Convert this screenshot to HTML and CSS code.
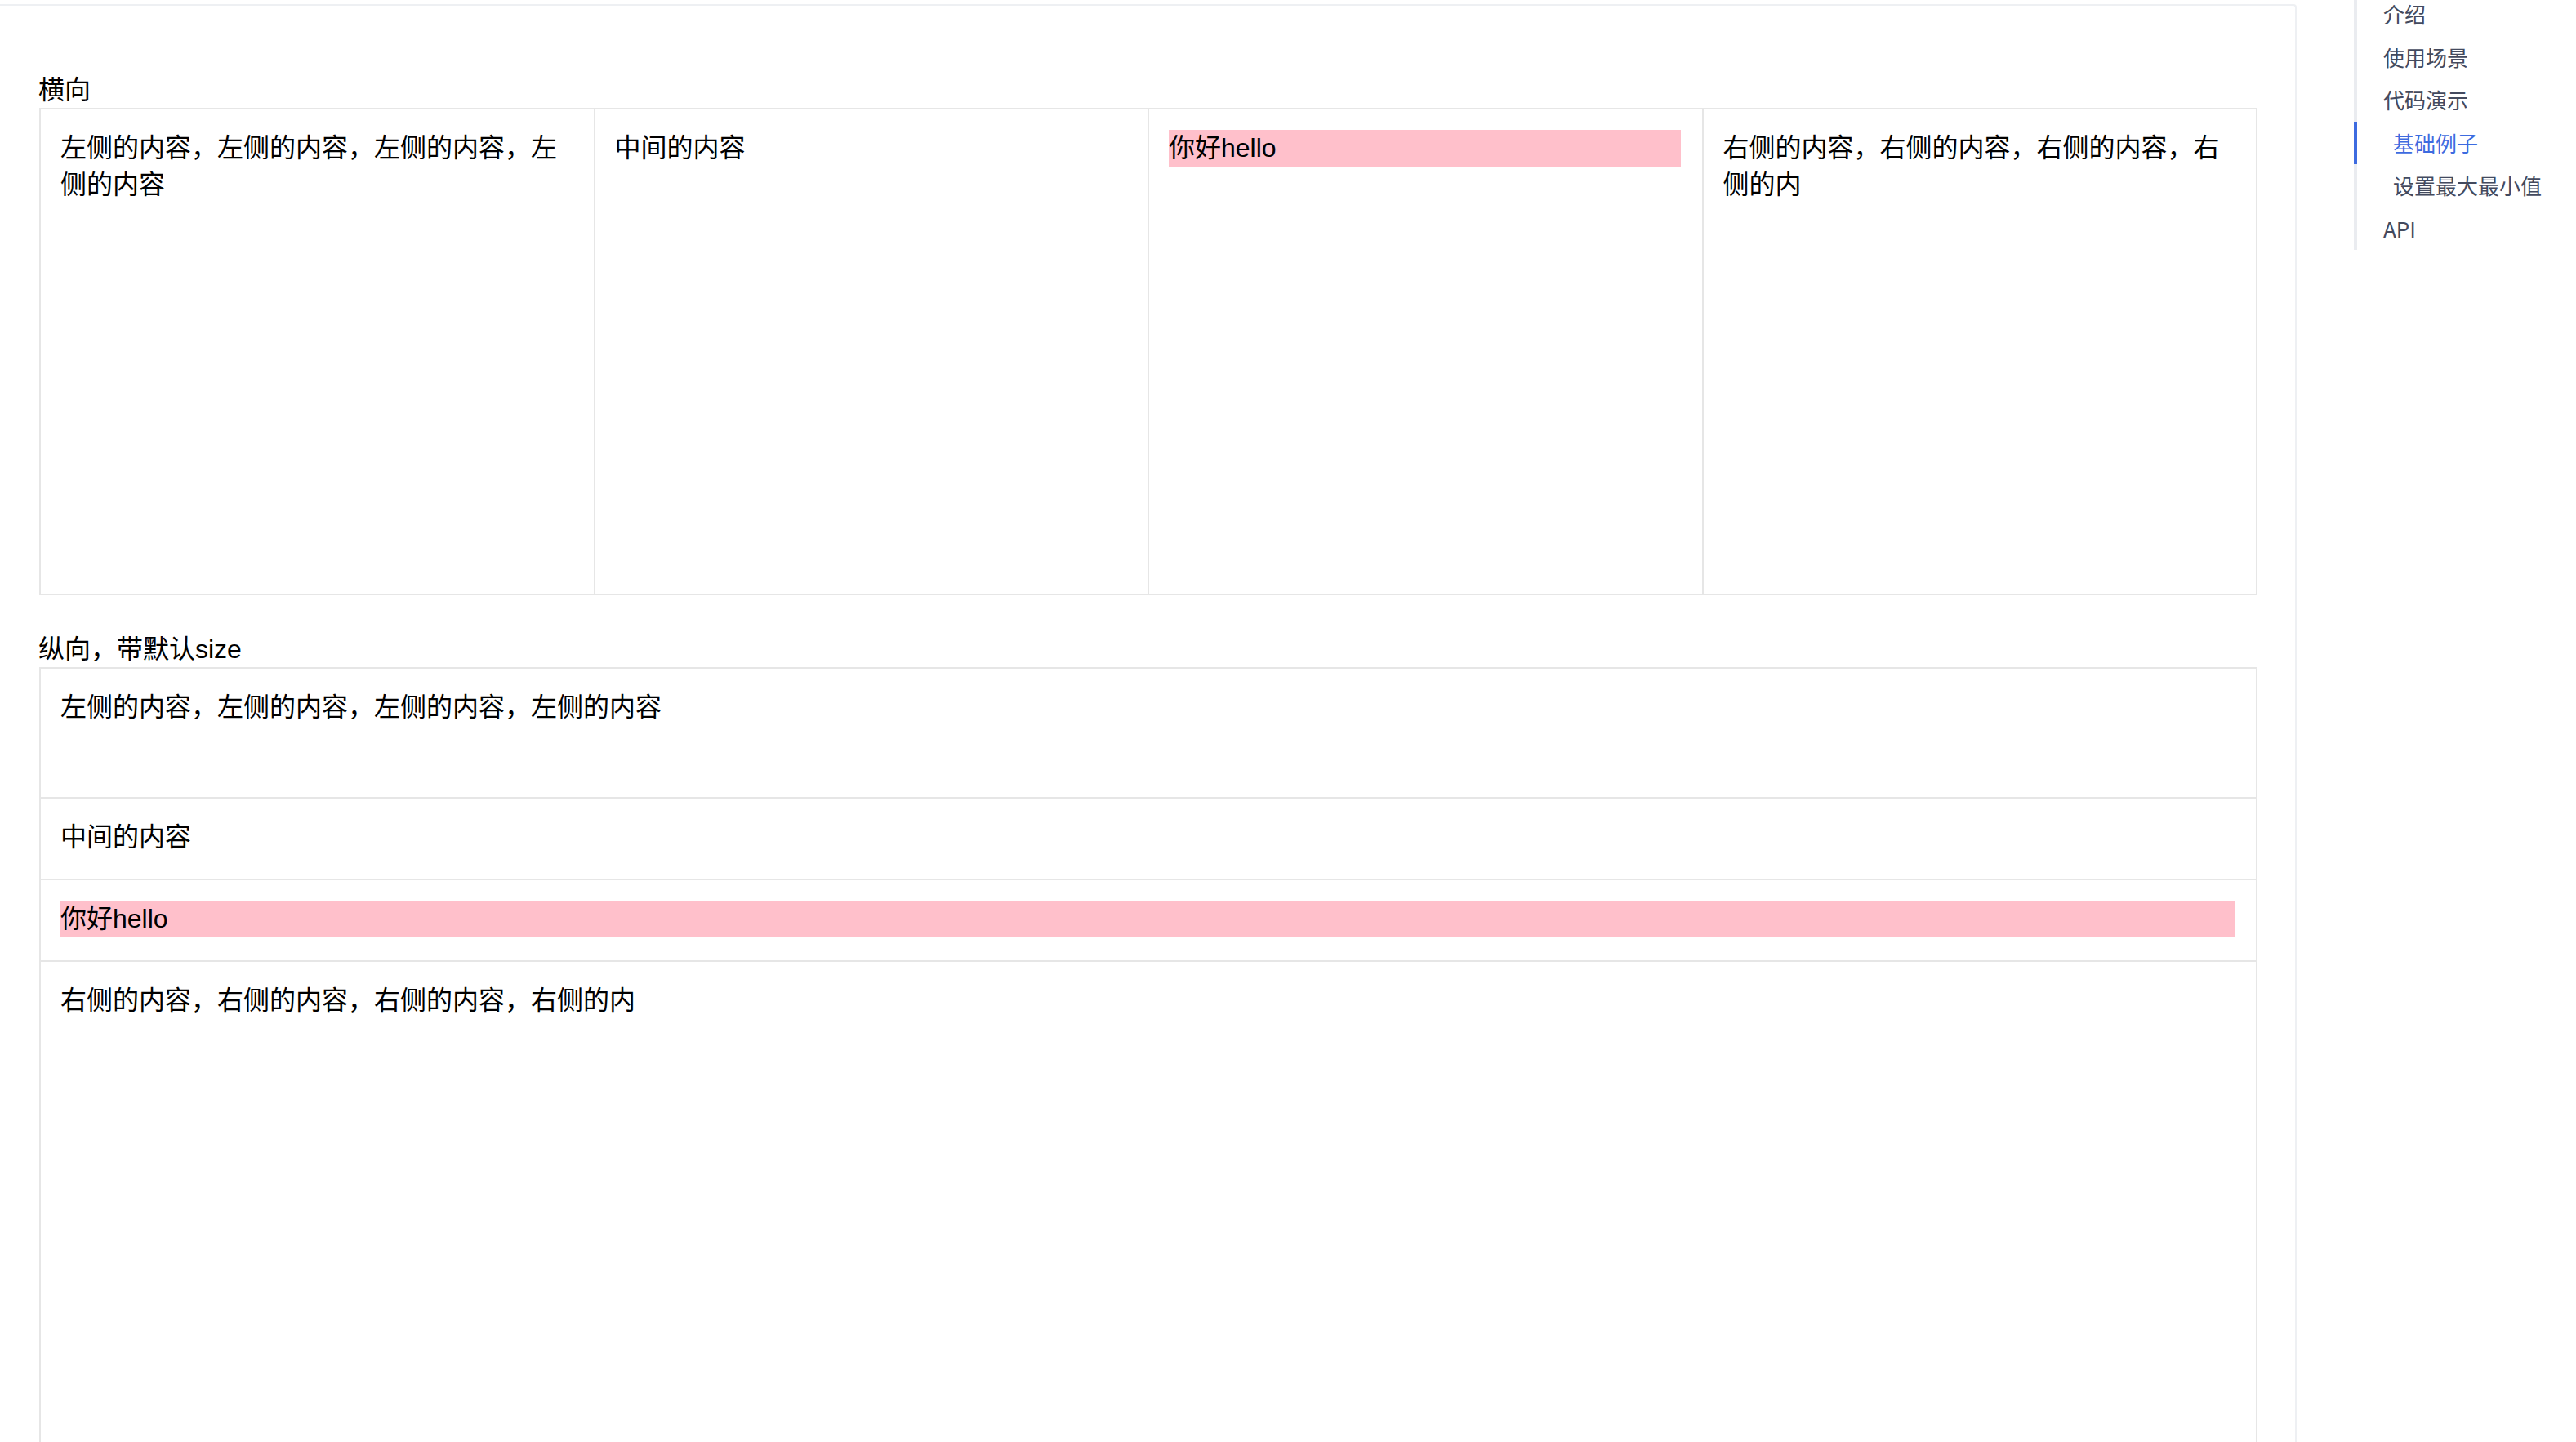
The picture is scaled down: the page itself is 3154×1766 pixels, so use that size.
FILE: index.html
```html
<!DOCTYPE html>
<html lang="zh-CN">
<head>
<meta charset="utf-8">
<title>Split 分割面板</title>
<link rel="stylesheet" href="styles.css">
</head>
<body>
<div class="page">
  <main class="main">
    <section class="demo">
      <div class="demo-label">横向</div>
      <div class="split split-h">
        <div class="pane">左侧的内容，左侧的内容，左侧的内容，左侧的内容</div>
        <div class="pane">中间的内容</div>
        <div class="pane"><div class="pink">你好hello</div></div>
        <div class="pane">右侧的内容，右侧的内容，右侧的内容，右侧的内</div>
      </div>
    </section>
    <section class="demo">
      <div class="demo-label">纵向，带默认size</div>
      <div class="split split-v">
        <div class="pane pane-sized">左侧的内容，左侧的内容，左侧的内容，左侧的内容</div>
        <div class="pane">中间的内容</div>
        <div class="pane"><div class="pink">你好hello</div></div>
        <div class="pane pane-fill">右侧的内容，右侧的内容，右侧的内容，右侧的内</div>
      </div>
    </section>
  </main>
  <aside class="toc">
    <ul class="toc-list">
      <li class="toc-item toc-first">介绍</li>
      <li class="toc-item">使用场景</li>
      <li class="toc-item">代码演示</li>
      <li class="toc-item toc-sub toc-active">基础例子</li>
      <li class="toc-item toc-sub">设置最大最小值</li>
      <li class="toc-item">API</li>
    </ul>
  </aside>
</div>
</body>
</html>
```
FILE: styles.css
```css
html, body {
  margin: 0;
  padding: 0;
  background: #ffffff;
  overflow: hidden;
}

body {
  font-family: "Liberation Sans", "Noto Sans CJK SC", sans-serif;
  color: #000000;
  height: 1766px;
}

.page {
  display: flex;
  align-items: flex-start;
  height: 1766px;
  overflow: hidden;
}

.main {
  box-sizing: border-box;
  width: 2812px;
  flex: 0 0 2812px;
  margin-top: 5px;
  min-height: 1800px;
  border-top: 2px solid #eef0f3;
  border-right: 2px solid #eef0f3;
  border-top-right-radius: 4px;
  padding: 81px 46px 0 48px;
}

.demo-label {
  font-size: 32px;
  line-height: 44px;
  margin-left: -1px;
}

.demo + .demo {
  margin-top: 44px;
}

.split {
  box-sizing: border-box;
  border: 2px solid #e6e6e6;
  display: flex;
}

.split-h {
  height: 597px;
}

.split-h .pane {
  flex: 1 1 0;
  min-width: 0;
  border-right: 2px solid #e6e6e6;
}

.split-h .pane:last-child {
  border-right: none;
}

.split-v {
  flex-direction: column;
  height: 1000px;
}

.split-v .pane {
  border-bottom: 2px solid #e6e6e6;
}

.split-v .pane-fill {
  flex: 1 1 auto;
  border-bottom: none;
}

.pane {
  box-sizing: content-box;
  padding: 25px 26px 26px 24px;
  font-size: 32px;
  line-height: 45px;
  overflow: hidden;
}

.split-v .pane {
  padding-top: 25px;
  padding-bottom: 28px;
}

.split-v .pane-sized {
  box-sizing: border-box;
  flex: 0 0 auto;
  height: 159px;
  padding-top: 25px;
}

.pink {
  background: #ffc0cb;
  height: 45px;
}

.toc {
  flex: 0 0 auto;
  margin-left: 70px;
}

.toc-list {
  list-style: none;
  margin: 0;
  padding: 0;
  border-left: 4px solid #eaecf0;
  width: 270px;
}

.toc-item {
  position: relative;
  box-sizing: border-box;
  height: 52.5px;
  padding-top: 11.25px;
  line-height: 30px;
  padding-left: 32px;
  font-size: 26px;
  color: #434a5e;
  white-space: nowrap;
  font-family: "Noto Sans CJK SC", "Noto Sans", sans-serif;
}

.toc-first {
  height: 43.5px;
  padding-top: 2.25px;
}

.toc-sub {
  padding-left: 44px;
}

.toc-active {
  color: #3d6be0;
}

.toc-active::before {
  content: "";
  position: absolute;
  left: -4px;
  top: 0;
  width: 4px;
  height: 52.5px;
  background: #3d6be0;
}
```
